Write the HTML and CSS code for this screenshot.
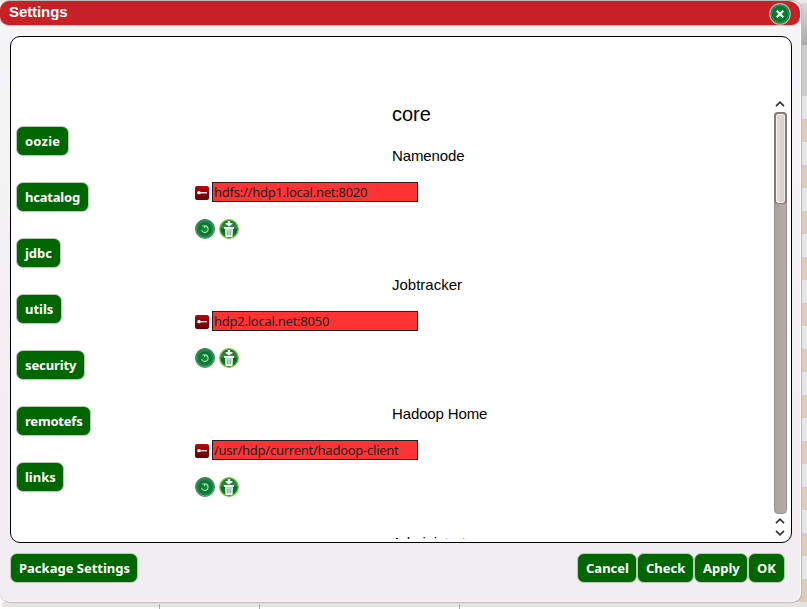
FILE: index.html
```
<!DOCTYPE html>
<html lang="en">
<head>
<meta charset="utf-8">
<title>Settings</title>
<link rel="stylesheet" href="styles.css">
</head>
<body>
<svg class="defs" width="0" height="0" aria-hidden="true">
  <defs>
    <linearGradient id="red" x1="0" y1="0" x2="0" y2="1"><stop offset="0" stop-color="#b9080c"/><stop offset="1" stop-color="#600004"/></linearGradient>
    <radialGradient id="green"><stop offset="0" stop-color="#079033"/><stop offset="1" stop-color="#08692a"/></radialGradient>
    <linearGradient id="rim" x1="0" y1="0" x2="0" y2="1"><stop offset="0" stop-color="#39885a"/><stop offset="1" stop-color="#55a578"/></linearGradient>
    <linearGradient id="bin" x1="0" y1="0" x2="0" y2="1"><stop offset="0" stop-color="#12652f"/><stop offset=".45" stop-color="#3b8c4e"/><stop offset=".5" stop-color="#08642a"/><stop offset="1" stop-color="#16813a"/></linearGradient>
  </defs>
  <symbol id="key" viewBox="0 0 14 14"><rect width="14" height="14" rx="2" fill="url(#red)"/><ellipse cx="4" cy="6.700" rx="1.800" ry="1.600" fill="#fff"/><path d="M5 6.700h7" stroke="#f6dede" stroke-width="1.400"/></symbol>
  <symbol id="reset" viewBox="0 0 20 20"><circle cx="10" cy="10" r="9.200" fill="url(#green)" stroke="url(#rim)" stroke-width="1.700"/><circle cx="10" cy="10" r="7.400" fill="none" stroke="#2f8751" stroke-width="1.200"/><path d="M9.500 6.900a3.300 3.300 0 1 1-2.900 4.300M7.300 7h2.300v2" fill="none" stroke="#b4dcbf" stroke-width="1.100"/></symbol>
  <symbol id="trash" viewBox="0 0 20 20"><circle cx="10" cy="10" r="9.300" fill="url(#bin)" stroke="#78c83a" stroke-width="1.300"/><path d="M8.800 2h2.400v2H13.500v1L10 7.600 6.500 5V4h2.300zM5 8h10v2H5zM6 10.300h8l-.5 7.700H6.500z" fill="#f4faf4"/><path d="M8.100 11.300l.3 5M10 11.300v5M11.900 11.300l-.3 5" stroke="#499460" stroke-width=".8"/></symbol>
  <symbol id="close" viewBox="0 0 22 22"><circle cx="11" cy="11" r="10.200" fill="url(#green)" stroke="#a3b5a4" stroke-width="1.400"/><circle cx="11" cy="11" r="8.700" fill="none" stroke="#2b8c51" stroke-width="1.500"/><path d="M7.800 7.800l6.400 6.400M14.200 7.800l-6.400 6.400" stroke="#fff" stroke-width="2"/></symbol>
  <symbol id="chevron" viewBox="0 0 10 6"><path d="M1 5.200L5 1.200l4 4" fill="none" stroke="#333" stroke-width="1.700"/></symbol>
</svg>
<div class="backdrop"></div>
<main class="dialog">
  <header class="titlebar">
    <h1>Settings</h1>
    <svg class="close"><use href="#close"/></svg>
  </header>
  <section class="panel">
    <nav class="tabs">
      <button class="w-oozie">oozie</button>
      <button class="w-hcatalog">hcatalog</button>
      <button class="w-jdbc">jdbc</button>
      <button class="w-utils">utils</button>
      <button class="w-security">security</button>
      <button class="w-remotefs">remotefs</button>
      <button class="w-links">links</button>
    </nav>
    <div class="content">
      <h2>core</h2>
      <div class="setting"><h3>Namenode</h3><div class="field"><svg class="key"><use href="#key"/></svg><div class="value">hdfs://hdp1.local.net:8020</div></div><div class="tools"><svg><use href="#reset"/></svg><svg><use href="#trash"/></svg></div></div>
      <div class="setting"><h3>Jobtracker</h3><div class="field"><svg class="key"><use href="#key"/></svg><div class="value">hdp2.local.net:8050</div></div><div class="tools"><svg><use href="#reset"/></svg><svg><use href="#trash"/></svg></div></div>
      <div class="setting"><h3>Hadoop Home</h3><div class="field"><svg class="key"><use href="#key"/></svg><div class="value">/usr/hdp/current/hadoop-client</div></div><div class="tools"><svg><use href="#reset"/></svg><svg><use href="#trash"/></svg></div></div>
      <div class="setting"><h3>Administrator</h3></div>
    </div>
    <div class="scrollbar">
      <svg class="chev"><use href="#chevron"/></svg>
      <div class="track"><div class="thumb"></div></div>
      <svg class="chev"><use href="#chevron"/></svg>
      <svg class="chev down"><use href="#chevron"/></svg>
    </div>
  </section>
  <footer>
    <button class="w-package">Package Settings</button>
    <div class="actions">
      <button class="w-cancel">Cancel</button>
      <button class="w-check">Check</button>
      <button class="w-apply">Apply</button>
      <button class="w-ok">OK</button>
    </div>
  </footer>
</main>
</body>
</html>
```
FILE: styles.css
```
* { box-sizing: border-box; }
body { margin: 0; width: 807px; height: 609px; overflow: hidden; background: #fff; font-family: "Liberation Sans", sans-serif; color: #000; }
h1, h2, h3 { margin: 0; }
svg { display: block; flex: none; }
.defs { position: absolute; }

/* page behind the dialog */
.backdrop {
  position: absolute; inset: 0; z-index: -1;
  background:
    linear-gradient(#aaa, #aaa) 159px 604px / 1px 5px no-repeat,
    linear-gradient(#aaa, #aaa) 259px 604px / 1px 5px no-repeat,
    linear-gradient(#aaa, #aaa) 459px 604px / 1px 5px no-repeat,
    linear-gradient(#fff, #fff) 0 607px / 807px 2px no-repeat,
    linear-gradient(#e4e4e4, #e4e4e4) 2px 602px / 805px 5px no-repeat,
    linear-gradient(#e9e9e9, #e9e9e9) 0 0 / 807px 3px no-repeat,
    linear-gradient(#d8d8d8, #aaa) 790px 3px / 17px 42px no-repeat,
    linear-gradient(#ccc, #ccc) 790px 45px / 17px 51px no-repeat,
    repeating-linear-gradient(#e6e6e6 0 23px, #e2cbb0 23px 46px) 790px 96px / 17px 506px no-repeat;
}

.dialog { width: 802px; height: 603px; display: flex; flex-direction: column; border: solid #bdb9b5; border-width: 1px 1px 1px 0; border-radius: 10px; background: linear-gradient(#f5f4f7, #f2edf1 75%); box-shadow: inset -1px -1px #fcfafc; }
.titlebar { height: 25px; width: 800px; display: flex; justify-content: space-between; padding: 0 9px; background: #c72127; border-bottom: 1px solid #e2b6b8; border-radius: 9px 12px 9px 9px; }
.titlebar h1 { font-size: 15px; line-height: 22px; color: #fff; letter-spacing: -.08px; }
.close { width: 22px; height: 22px; margin-top: 2px; }

.panel { width: 782px; height: 507px; margin: 10px 0 0 10px; display: flex; border: 1px solid #000; border-radius: 10px; background: #fff; overflow: hidden; }
.tabs { width: 184px; padding: 89px 0 0 5px; display: flex; flex-direction: column; align-items: flex-start; gap: 26px; }
button { height: 30px; padding: 0 0 1px 8px; text-align: left; border: 1px solid #bcc8b8; border-radius: 7px; background: #060; color: #fff; font: bold 13px "Noto Sans", sans-serif; white-space: nowrap; }
.w-oozie { width: 53px; letter-spacing: .2px; }
.w-hcatalog { width: 73px; letter-spacing: -.2px; }
.w-jdbc { width: 45px; }
.w-utils { width: 46px; }
.w-security { width: 69px; letter-spacing: -.1px; }
.w-remotefs { width: 75px; letter-spacing: -.2px; }
.w-links { width: 48px; }

.content { width: 579px; height: 502px; padding-top: 61px; overflow: hidden; }
.content h2 { height: 47px; padding: 5px 0 0 197px; font-size: 20px; line-height: 23px; font-weight: normal; }
.setting { height: 129px; }
.setting h3 { height: 37px; padding: 2px 0 0 197px; font-size: 15px; line-height: 18px; font-weight: normal; letter-spacing: -.13px; }
.setting:nth-of-type(2) h3 { letter-spacing: 0; }
.field { display: flex; align-items: center; gap: 3px; height: 20px; }
.key { width: 14px; height: 14px; margin-top: 2px; }
.value { width: 206px; height: 20px; padding-left: 1px; border: 1px solid #222; background: #f33; color: #222; font: 13px/18px "Noto Sans", sans-serif; letter-spacing: -.25px; white-space: nowrap; }
.tools { display: flex; gap: 4px; padding-top: 17px; }
.tools svg { width: 20px; height: 20px; }

.scrollbar { width: 13px; padding-top: 64px; display: flex; flex-direction: column; align-items: flex-start; }
.chev { width: 10px; height: 6px; margin-left: 1px; }
.track { width: 13px; height: 402px; margin: 5px 0 4px; border: 1px solid #999190; border-radius: 4px; background: linear-gradient(90deg, #aaa2a0, #b4acaa); }
.thumb { width: 13px; height: 92px; margin: -1px; border: 2px solid #827b76; border-bottom-width: 1px; border-radius: 4px; background: linear-gradient(90deg, #e0ddd9, #d3cfca); box-shadow: inset 0 0 0 1px #f0eeeb; }
.down { transform: rotate(180deg); margin-top: 6px; }

footer { display: flex; justify-content: space-between; margin: 10px 16px 0 10px; }
.actions { display: flex; }
.w-package { width: 128px; }
.w-cancel { width: 60px; }
.w-check { width: 57px; }
.w-apply { width: 54px; }
.w-ok { width: 37px; }
```
